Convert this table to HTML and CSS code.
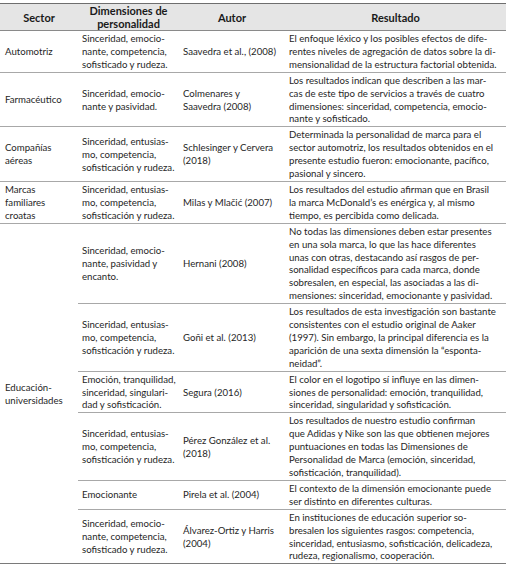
FILE: index.html
```html
<!DOCTYPE html>
<html lang="es">
<head>
<meta charset="utf-8">
<title>Dimensiones de personalidad de marca</title>
<link rel="stylesheet" href="styles.css">
</head>
<body>
<table class="grid">
  <colgroup>
    <col class="c-sector">
    <col class="c-dim">
    <col class="c-autor">
    <col class="c-res">
  </colgroup>
  <thead>
    <tr>
      <th>Sector</th>
      <th>Dimensiones de<br>personalidad</th>
      <th>Autor</th>
      <th>Resultado</th>
    </tr>
  </thead>
  <tbody>
    <tr>
      <td class="sector"><div class="cell">Automotriz</div></td>
      <td><div class="cell">Sinceridad, emocio-<br>nante, competencia,<br>sofisticado y rudeza.</div></td>
      <td class="autor"><div class="cell">Saavedra et al., (2008)</div></td>
      <td><div class="cell">El enfoque léxico y los posibles efectos de dife-<br>rentes niveles de agregación de datos sobre la di-<br>mensionalidad de la estructura factorial obtenida.</div></td>
    </tr>
    <tr>
      <td class="sector"><div class="cell">Farmacéutico</div></td>
      <td><div class="cell">Sinceridad, emocio-<br>nante y pasividad.</div></td>
      <td class="autor"><div class="cell">Colmenares y<br>Saavedra (2008)</div></td>
      <td><div class="cell">Los resultados indican que describen a las mar-<br>cas de este tipo de servicios a través de cuatro<br>dimensiones: sinceridad, competencia, emocio-<br>nante y sofisticado.</div></td>
    </tr>
    <tr>
      <td class="sector"><div class="cell">Compañías<br>aéreas</div></td>
      <td><div class="cell">Sinceridad, entusias-<br>mo, competencia,<br>sofisticación y rudeza.</div></td>
      <td class="autor"><div class="cell">Schlesinger y Cervera<br>(2018)</div></td>
      <td><div class="cell">Determinada la personalidad de marca para el<br>sector automotriz, los resultados obtenidos en el<br>presente estudio fueron: emocionante, pacífico,<br>pasional y sincero.</div></td>
    </tr>
    <tr>
      <td class="sector"><div class="cell">Marcas<br>familiares<br>croatas</div></td>
      <td><div class="cell">Sinceridad, entusias-<br>mo, competencia,<br>sofisticación y rudeza.</div></td>
      <td class="autor"><div class="cell">Milas y Mlačić (2007)</div></td>
      <td><div class="cell">Los resultados del estudio afirman que en Brasil<br>la marca McDonald’s es enérgica y, al mismo<br>tiempo, es percibida como delicada.</div></td>
    </tr>
    <tr>
      <td class="sector group" rowspan="6"><div class="cell">Educación-<br>universidades</div></td>
      <td><div class="cell">Sinceridad, emocio-<br>nante, pasividad y<br>encanto.</div></td>
      <td class="autor"><div class="cell">Hernani (2008)</div></td>
      <td><div class="cell">No todas las dimensiones deben estar presentes<br>en una sola marca, lo que las hace diferentes<br>unas con otras, destacando así rasgos de per-<br>sonalidad específicos para cada marca, donde<br>sobresalen, en especial, las asociadas a las di-<br>mensiones: sinceridad, emocionante y pasividad.</div></td>
    </tr>
    <tr>
      <td><div class="cell">Sinceridad, entusias-<br>mo, competencia,<br>sofisticación y rudeza.</div></td>
      <td class="autor"><div class="cell">Goñi et al. (2013)</div></td>
      <td><div class="cell">Los resultados de esta investigación son bastante<br>consistentes con el estudio original de Aaker<br>(1997). Sin embargo, la principal diferencia es la<br>aparición de una sexta dimensión la “esponta-<br>neidad”.</div></td>
    </tr>
    <tr>
      <td><div class="cell">Emoción, tranquilidad,<br>sinceridad, singulari-<br>dad y sofisticación.</div></td>
      <td class="autor"><div class="cell">Segura (2016)</div></td>
      <td><div class="cell">El color en el logotipo sí influye en las dimen-<br>siones de personalidad: emoción, tranquilidad,<br>sinceridad, singularidad y sofisticación.</div></td>
    </tr>
    <tr>
      <td><div class="cell">Sinceridad, entusias-<br>mo, competencia,<br>sofisticación y rudeza.</div></td>
      <td class="autor"><div class="cell">Pérez González et al.<br>(2018)</div></td>
      <td><div class="cell">Los resultados de nuestro estudio confirman<br>que Adidas y Nike son las que obtienen mejores<br>puntuaciones en todas las Dimensiones de<br>Personalidad de Marca (emoción, sinceridad,<br>sofisticación, tranquilidad).</div></td>
    </tr>
    <tr>
      <td><div class="cell">Emocionante</div></td>
      <td class="autor"><div class="cell">Pirela et al. (2004)</div></td>
      <td><div class="cell">El contexto de la dimensión emocionante puede<br>ser distinto en diferentes culturas.</div></td>
    </tr>
    <tr class="last">
      <td><div class="cell">Sinceridad, emocio-<br>nante, competencia,<br>sofisticado y rudeza.</div></td>
      <td class="autor"><div class="cell">Álvarez-Ortiz y Harris<br>(2004)</div></td>
      <td><div class="cell">En instituciones de educación superior so-<br>bresalen los siguientes rasgos: competencia,<br>sinceridad, entusiasmo, sofisticación, delicadeza,<br>rudeza, regionalismo, cooperación.</div></td>
    </tr>
  </tbody>
</table>
</body>
</html>
```
FILE: styles.css
```css
html, body {
  margin: 0;
  padding: 0;
  background: #ffffff;
}

body {
  padding-top: 3px;
  font-family: Lato, "Liberation Sans", sans-serif;
  color: #262626;
}

.grid {
  width: 506px;
  border-collapse: collapse;
  table-layout: fixed;
  font-size: 9.65px;
  line-height: 12.9px;
}

.c-sector { width: 78px; }
.c-dim { width: 101px; }
.c-autor { width: 106px; }
.c-res { width: 221px; }

.grid th {
  background: #e5e5e5;
  color: #1a1a1a;
  font-weight: 700;
  font-size: 11px;
  line-height: 13px;
  text-align: center;
  padding: 0 4px;
  border-top: 1px solid #6e6e6e;
  border-bottom: 1px solid #8a8a8a;
}

.grid td {
  padding: 1px 4px;
  vertical-align: middle;
  border-bottom: 1px solid #a8a8a8;
}

.cell {
  display: block;
  text-align: left;
  white-space: nowrap;
}

.grid td.sector {
  padding-left: 5px;
}

.grid tr.last td,
.grid td.group {
  border-bottom: 1px solid #7a7a7a;
}
```
